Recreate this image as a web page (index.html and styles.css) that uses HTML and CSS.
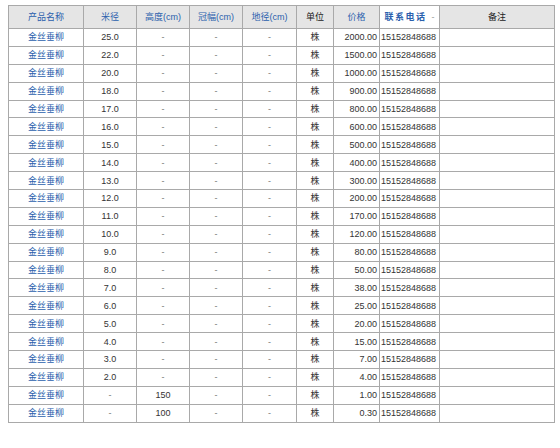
FILE: index.html
```html
<!DOCTYPE html>
<html>
<head>
<meta charset="utf-8">
<link rel="stylesheet" href="styles.css">
</head>
<body>
<table class="price">
<colgroup>
<col class="c1"><col class="c2"><col class="c3"><col class="c4"><col class="c5"><col class="c6"><col class="c7"><col class="c8"><col class="c9">
</colgroup>
<thead>
<tr>
<th class="lk">产品名称</th><th class="lk">米径</th><th class="lk">高度(cm)</th><th class="lk">冠幅(cm)</th><th class="lk">地径(cm)</th><th>单位</th><th class="lk">价格</th><th class="lk sel">联系电话<span class="sort">-</span></th><th>备注</th>
</tr>
</thead>
<tbody>
<tr><td class="nm">金丝垂柳</td><td>25.0</td><td class="d">-</td><td class="d">-</td><td class="d">-</td><td>株</td><td class="pr">2000.00</td><td class="ph">15152848688</td><td></td></tr>
<tr><td class="nm">金丝垂柳</td><td>22.0</td><td class="d">-</td><td class="d">-</td><td class="d">-</td><td>株</td><td class="pr">1500.00</td><td class="ph">15152848688</td><td></td></tr>
<tr><td class="nm">金丝垂柳</td><td>20.0</td><td class="d">-</td><td class="d">-</td><td class="d">-</td><td>株</td><td class="pr">1000.00</td><td class="ph">15152848688</td><td></td></tr>
<tr><td class="nm">金丝垂柳</td><td>18.0</td><td class="d">-</td><td class="d">-</td><td class="d">-</td><td>株</td><td class="pr">900.00</td><td class="ph">15152848688</td><td></td></tr>
<tr><td class="nm">金丝垂柳</td><td>17.0</td><td class="d">-</td><td class="d">-</td><td class="d">-</td><td>株</td><td class="pr">800.00</td><td class="ph">15152848688</td><td></td></tr>
<tr><td class="nm">金丝垂柳</td><td>16.0</td><td class="d">-</td><td class="d">-</td><td class="d">-</td><td>株</td><td class="pr">600.00</td><td class="ph">15152848688</td><td></td></tr>
<tr><td class="nm">金丝垂柳</td><td>15.0</td><td class="d">-</td><td class="d">-</td><td class="d">-</td><td>株</td><td class="pr">500.00</td><td class="ph">15152848688</td><td></td></tr>
<tr><td class="nm">金丝垂柳</td><td>14.0</td><td class="d">-</td><td class="d">-</td><td class="d">-</td><td>株</td><td class="pr">400.00</td><td class="ph">15152848688</td><td></td></tr>
<tr><td class="nm">金丝垂柳</td><td>13.0</td><td class="d">-</td><td class="d">-</td><td class="d">-</td><td>株</td><td class="pr">300.00</td><td class="ph">15152848688</td><td></td></tr>
<tr><td class="nm">金丝垂柳</td><td>12.0</td><td class="d">-</td><td class="d">-</td><td class="d">-</td><td>株</td><td class="pr">200.00</td><td class="ph">15152848688</td><td></td></tr>
<tr><td class="nm">金丝垂柳</td><td>11.0</td><td class="d">-</td><td class="d">-</td><td class="d">-</td><td>株</td><td class="pr">170.00</td><td class="ph">15152848688</td><td></td></tr>
<tr><td class="nm">金丝垂柳</td><td>10.0</td><td class="d">-</td><td class="d">-</td><td class="d">-</td><td>株</td><td class="pr">120.00</td><td class="ph">15152848688</td><td></td></tr>
<tr><td class="nm">金丝垂柳</td><td>9.0</td><td class="d">-</td><td class="d">-</td><td class="d">-</td><td>株</td><td class="pr">80.00</td><td class="ph">15152848688</td><td></td></tr>
<tr><td class="nm">金丝垂柳</td><td>8.0</td><td class="d">-</td><td class="d">-</td><td class="d">-</td><td>株</td><td class="pr">50.00</td><td class="ph">15152848688</td><td></td></tr>
<tr><td class="nm">金丝垂柳</td><td>7.0</td><td class="d">-</td><td class="d">-</td><td class="d">-</td><td>株</td><td class="pr">38.00</td><td class="ph">15152848688</td><td></td></tr>
<tr><td class="nm">金丝垂柳</td><td>6.0</td><td class="d">-</td><td class="d">-</td><td class="d">-</td><td>株</td><td class="pr">25.00</td><td class="ph">15152848688</td><td></td></tr>
<tr><td class="nm">金丝垂柳</td><td>5.0</td><td class="d">-</td><td class="d">-</td><td class="d">-</td><td>株</td><td class="pr">20.00</td><td class="ph">15152848688</td><td></td></tr>
<tr><td class="nm">金丝垂柳</td><td>4.0</td><td class="d">-</td><td class="d">-</td><td class="d">-</td><td>株</td><td class="pr">15.00</td><td class="ph">15152848688</td><td></td></tr>
<tr><td class="nm">金丝垂柳</td><td>3.0</td><td class="d">-</td><td class="d">-</td><td class="d">-</td><td>株</td><td class="pr">7.00</td><td class="ph">15152848688</td><td></td></tr>
<tr><td class="nm">金丝垂柳</td><td>2.0</td><td class="d">-</td><td class="d">-</td><td class="d">-</td><td>株</td><td class="pr">4.00</td><td class="ph">15152848688</td><td></td></tr>
<tr><td class="nm">金丝垂柳</td><td class="d">-</td><td>150</td><td class="d">-</td><td class="d">-</td><td>株</td><td class="pr">1.00</td><td class="ph">15152848688</td><td></td></tr>
<tr><td class="nm">金丝垂柳</td><td class="d">-</td><td>100</td><td class="d">-</td><td class="d">-</td><td>株</td><td class="pr">0.30</td><td class="ph">15152848688</td><td></td></tr>
</tbody>
</table>
</body>
</html>
```

FILE: styles.css
```css
html, body {
  margin: 0;
  padding: 0;
  background: #ffffff;
}
body {
  padding: 5px 0 0 8px;
  font-family: "Liberation Sans", Arial, "Noto Sans CJK SC", sans-serif;
  font-size: 9px;
  color: #333333;
}
.price {
  border-collapse: collapse;
  table-layout: fixed;
  width: 546px;
  border: 1px solid #9a9a9a;
}
.c1 { width: 75px; }
.c2 { width: 53px; }
.c3 { width: 53px; }
.c4 { width: 53px; }
.c5 { width: 54px; }
.c6 { width: 37px; }
.c7 { width: 46px; }
.c8 { width: 60px; }
.c9 { width: 115px; }
.price th,
.price td {
  border: 1px solid #a9a9a9;
  padding: 0;
  text-align: center;
  white-space: nowrap;
  overflow: hidden;
  line-height: 12px;
}
.price th {
  height: 22px;
  background: #e5e5e5;
  font-weight: normal;
  color: #222222;
}
.price th.lk {
  color: #2b5fad;
}
.price th.sel {
  background: #ffffff;
  font-weight: bold;
  letter-spacing: 1.5px;
}
.sort {
  color: #999999;
  font-weight: normal;
  margin-left: 5px;
  letter-spacing: 0;
}
.price td {
  height: 16.9px;
}
.price td.nm {
  color: #2b5fad;
}
.price td.d {
  color: #777777;
}
.price td.pr {
  text-align: right;
  padding-right: 2px;
}
.price td.ph {
  text-align: left;
  padding-left: 1px;
}
```
